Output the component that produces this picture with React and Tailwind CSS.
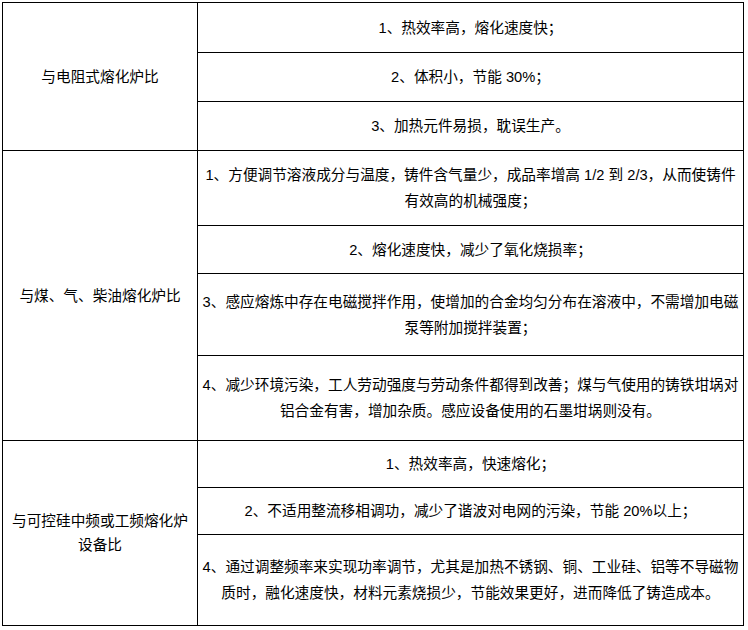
const groups = [
  {
    label: ["与电阻式熔化炉比"],
    rows: [
      { h: "h-[50px]", lines: ["1、热效率高，熔化速度快；"] },
      { h: "h-[49px]", lines: ["2、体积小，节能 30%；"] },
      { h: "h-[49px]", lines: ["3、加热元件易损，耽误生产。"] },
    ],
  },
  {
    label: ["与煤、气、柴油熔化炉比"],
    rows: [
      {
        h: "h-[75px]",
        lines: [
          "1、方便调节溶液成分与温度，铸件含气量少，成品率增高 1/2 到 2/3，从而使铸件",
          "有效高的机械强度；",
        ],
      },
      { h: "h-[48px]", lines: ["2、熔化速度快，减少了氧化烧损率；"] },
      {
        h: "h-[82px]",
        lines: [
          "3、感应熔炼中存在电磁搅拌作用，使增加的合金均匀分布在溶液中，不需增加电磁",
          "泵等附加搅拌装置；",
        ],
      },
      {
        h: "h-[85px]",
        lines: [
          "4、减少环境污染，工人劳动强度与劳动条件都得到改善；煤与气使用的铸铁坩埚对",
          "铝合金有害，增加杂质。感应设备使用的石墨坩埚则没有。",
        ],
      },
    ],
  },
  {
    label: ["与可控硅中频或工频熔化炉", "设备比"],
    rows: [
      { h: "h-[47px]", lines: ["1、热效率高，快速熔化；"] },
      { h: "h-[47px]", lines: ["2、不适用整流移相调功，减少了谐波对电网的污染，节能 20%以上；"] },
      {
        h: "h-[91px]",
        lines: [
          "4、通过调整频率来实现功率调节，尤其是加热不锈钢、铜、工业硅、铝等不导磁物",
          "质时，融化速度快，材料元素烧损少，节能效果更好，进而降低了铸造成本。",
        ],
      },
    ],
  },
];

function Lines({ lines, leading }) {
  return lines.map((l, i) => (
    <span key={i} className={`block whitespace-nowrap ${leading}`}>
      {l}
    </span>
  ));
}

export default function App() {
  return (
    <div className="bg-white w-[748px] h-[630px] pt-[2px] pl-[2px]">
      <table
        className="table-fixed border-collapse w-[742px] text-[14.67px] text-black"
        style={{ fontFamily: '"Liberation Sans", "Noto Sans CJK SC", sans-serif' }}
      >
        <colgroup>
          <col className="w-[195px]" />
          <col />
        </colgroup>
        <tbody>
          {groups.map((g, gi) =>
            g.rows.map((r, ri) => (
              <tr key={`${gi}-${ri}`} className={r.h}>
                {ri === 0 && (
                  <td
                    rowSpan={g.rows.length}
                    className="border border-black text-center align-middle px-[6px]"
                  >
                    <Lines lines={g.label} leading="leading-[24px]" />
                  </td>
                )}
                <td className="border border-black text-center align-middle px-[4px]">
                  <Lines lines={r.lines} leading="leading-[26px]" />
                </td>
              </tr>
            ))
          )}
        </tbody>
      </table>
    </div>
  );
}
